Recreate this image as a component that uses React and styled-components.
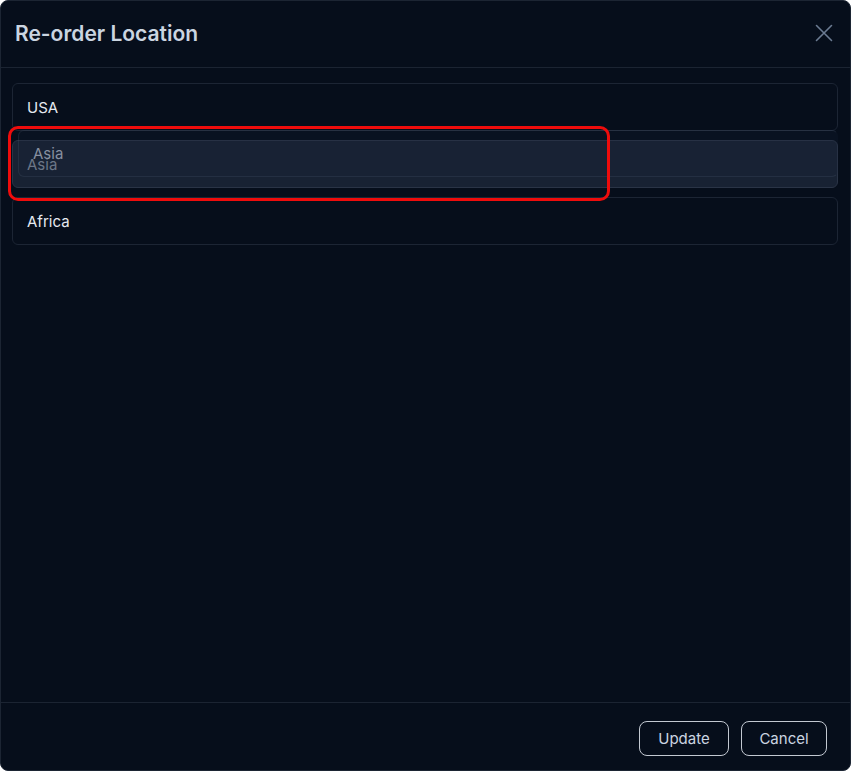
import React from "react";
import styled, { createGlobalStyle } from "styled-components";

const GlobalStyle = createGlobalStyle`
  html, body {
    margin: 0;
    padding: 0;
    background: #ffffff;
  }
  * {
    box-sizing: border-box;
  }
`;

const Dialog = styled.section`
  position: relative;
  width: 851px;
  height: 771px;
  display: flex;
  flex-direction: column;
  background: #060e1b;
  border: 1px solid #1c2533;
  border-radius: 8px;
  font-family: Inter, "Noto Sans", sans-serif;
  overflow: hidden;
`;

const Header = styled.header`
  height: 67px;
  display: flex;
  align-items: center;
  justify-content: space-between;
  padding: 0 17px 2px 14px;
  border-bottom: 1px solid #1b2432;
`;

const Title = styled.h2`
  margin: 0;
  font-size: 21px;
  font-weight: 600;
  color: #cbd5e1;
`;

const CloseButton = styled.button`
  display: flex;
  align-items: center;
  justify-content: center;
  padding: 0;
  border: none;
  background: none;
  color: #6b7b92;
  cursor: pointer;
`;

const List = styled.div`
  flex: 1;
  display: flex;
  flex-direction: column;
  gap: 10px;
  padding: 15px 12px 14px 11px;
`;

const Item = styled.div`
  height: 48px;
  margin-top: ${(p) => (p.$first ? "0" : "-1px")};
  display: flex;
  align-items: center;
  padding: 0 14px;
  border: 1px solid ${(p) => (p.$placeholder ? "#2a3446" : "#1c2534")};
  border-radius: 6px;
  background: ${(p) => (p.$placeholder ? "#182233" : "transparent")};
  color: ${(p) => (p.$placeholder ? "#7e8898" : "#e5e9f0")};
  font-size: 15px;
  font-weight: 400;
`;

const DragGhost = styled.div`
  position: absolute;
  left: 17px;
  top: 129px;
  width: 820px;
  height: 47px;
  display: flex;
  align-items: center;
  padding: 0 14px;
  border: 1px solid rgba(100, 116, 139, 0.16);
  border-right-color: transparent;
  border-radius: 6px;
  background: rgba(30, 41, 59, 0.18);
  color: #8790a0;
  font-size: 15px;
  font-weight: 400;
  pointer-events: none;
`;

const Highlight = styled.div`
  position: absolute;
  left: 7px;
  top: 125px;
  width: 602px;
  height: 75px;
  border: 3px solid #ee0c0c;
  border-radius: 10px;
  pointer-events: none;
`;

const Footer = styled.footer`
  display: flex;
  justify-content: flex-end;
  gap: 12px;
  padding: 18px 23px 14px;
  border-top: 1px solid #1b2432;
`;

const Button = styled.button`
  width: ${(p) => p.$w}px;
  height: 35px;
  padding: 0;
  border: 1px solid #c3c9d2;
  border-radius: 8px;
  background: transparent;
  color: #cbd5e1;
  font-family: Inter, "Noto Sans", sans-serif;
  font-size: 15px;
  font-weight: 400;
  cursor: pointer;
`;

const CloseIcon = () => (
  <svg width="18" height="18" viewBox="0 0 18 18" fill="none">
    <path
      d="M1.5 1.5L16.5 16.5M16.5 1.5L1.5 16.5"
      stroke="currentColor"
      strokeWidth="1.6"
      strokeLinecap="round"
    />
  </svg>
);

const locations = [
  { id: "usa", name: "USA" },
  { id: "asia", name: "Asia", dragging: true },
  { id: "africa", name: "Africa" },
];

export default function App() {
  return (
    <>
      <GlobalStyle />
      <Dialog>
        <Header>
          <Title>Re-order Location</Title>
          <CloseButton aria-label="Close">
            <CloseIcon />
          </CloseButton>
        </Header>
        <List>
          {locations.map((loc, i) => (
            <Item key={loc.id} $first={i === 0} $placeholder={loc.dragging}>
              {loc.name}
            </Item>
          ))}
        </List>
        <Footer>
          <Button $w={90}>Update</Button>
          <Button $w={86}>Cancel</Button>
        </Footer>
        <DragGhost>Asia</DragGhost>
        <Highlight />
      </Dialog>
    </>
  );
}
